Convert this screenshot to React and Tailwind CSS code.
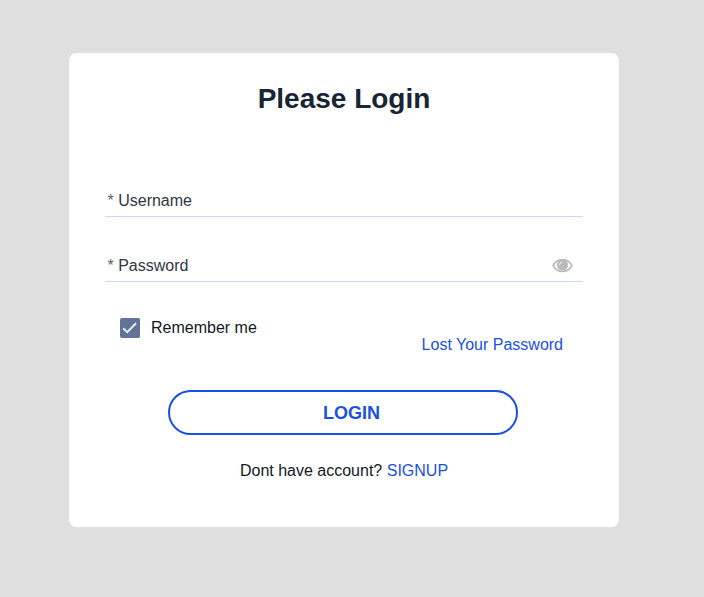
import React from 'react'

function Field({ label, children }) {
  return (
    <label className="flex items-center justify-between h-8 border-b border-[#cbdaf0] pl-[2.5px] pr-2.5">
      <span className="text-[#2f3744]"><span className="text-[#5b626e]">*</span> {label}</span>
      {children}
    </label>
  )
}

function App() {
  return (
    <div className="h-screen bg-[#e0e0e0] pt-[53px] pl-[69px] text-base leading-6 text-[#111827] font-['Liberation_Sans',Arial,sans-serif]">
      <form className="w-[550px] h-[474px] rounded-lg bg-white px-9">
        <h1 className="pt-[30px] text-center text-[28px] leading-8 font-bold text-[#172536]">Please Login</h1>
        <div className="mt-[70px] flex flex-col gap-[33px]">
          <Field label="Username" />
          <Field label="Password">
            <svg viewBox="0 0 21 15" className="w-[21px] h-[15px] fill-none stroke-[#b9b9b9]">
              <path d="M1 7.500Q4.500 1.500 10.500 1.500T20 7.500Q16.500 13.500 10.500 13.500T1 7.500Z" strokeWidth="1.500" />
              <circle cx="10.500" cy="7" r="5.500" className="fill-[#b9b9b9] stroke-none" />
              <path d="M7.500 6.500Q7.700 4.300 9.800 4" className="stroke-white" strokeLinecap="round" />
            </svg>
          </Field>
        </div>
        <div className="mt-[34px] flex justify-between pl-[15px] pr-5">
          <label className="flex items-center h-6 gap-[11px]">
            <span className="w-5 h-5 rounded-[2px] bg-[#627399]">
              <svg viewBox="0 0 20 20" className="w-5 h-5 fill-none stroke-[#eceef3] stroke-2">
                <path d="M3.300 10.300 7.300 14.200 16 5.300" />
              </svg>
            </span>
            <span>Remember me</span>
          </label>
          <a className="mt-[17px] text-[#1a50e6]">Lost Your Password</a>
        </div>
        <button type="button" className="mt-[33px] ml-[63px] block w-[350px] h-[45px] rounded-full border-2 border-[#1a50e6] pl-[17px] text-lg font-bold text-[#1a50e6]">LOGIN</button>
        <p className="mt-6 text-center">
          Dont have account? <a className="text-[#1a50e6]">SIGNUP</a>
        </p>
      </form>
    </div>
  )
}

export default App
